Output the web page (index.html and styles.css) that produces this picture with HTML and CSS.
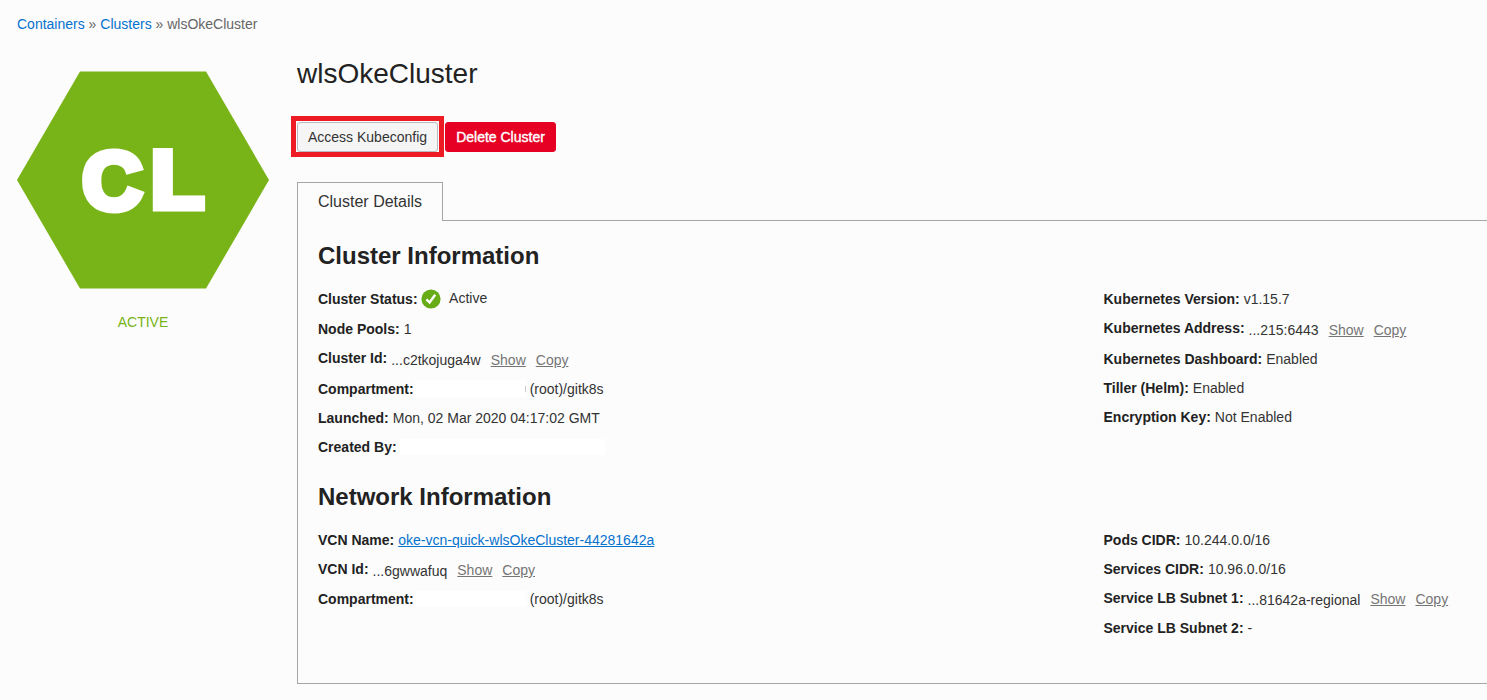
FILE: index.html
```html
<!DOCTYPE html>
<html lang="en">
<head>
<meta charset="utf-8">
<title>wlsOkeCluster</title>
<link rel="stylesheet" href="styles.css">
</head>
<body>
<nav class="breadcrumb"><a href="#">Containers</a> » <a href="#">Clusters</a> » wlsOkeCluster</nav>
<div class="layout">
  <aside class="badge">
    <svg class="hexagon" width="252" height="218" viewBox="0 0 252 218">
      <path fill="#78b417" d="M63 .5H189L252 109 189 217.5H63L0 109Z"/>
      <g class="initials">
        <text transform="translate(65.2 137.8) scale(1.02 1)">C</text>
        <text transform="translate(133.8 137.3) scale(1.07 1)">L</text>
      </g>
    </svg>
    <div class="state">ACTIVE</div>
  </aside>
  <main class="content">
    <h1 class="title">wlsOkeCluster</h1>
    <div class="actions">
      <div class="highlight"><button class="btn">Access Kubeconfig</button></div>
      <button class="btn danger">Delete Cluster</button>
    </div>
    <div class="tabs"><div class="tab">Cluster Details</div><div class="tab-line"></div></div>
    <section class="panel">
      <h2 class="heading">Cluster Information</h2>
      <div class="columns cluster">
        <div>
          <div class="row tall"><b>Cluster Status:</b>
            <svg class="check" width="20" height="20" viewBox="0 0 20 20"><circle cx="10" cy="10" r="9.6" fill="#67ac17"/><path d="M5.4 10.4L8.6 13.4L14.2 5.8" fill="none" stroke="#fff" stroke-width="2.4"/></svg>
            <span class="active">Active</span></div>
          <div class="row"><b>Node Pools:</b><span>1</span></div>
          <div class="row id"><b>Cluster Id:</b><span class="ocid">...c2tkojuga4w</span><a class="link" href="#">Show</a><a class="link" href="#">Copy</a></div>
          <div class="row"><b>Compartment:</b><span class="redacted clipped"></span><span class="path">(root)/gitk8s</span></div>
          <div class="row"><b>Launched:</b><span>Mon, 02 Mar 2020 04:17:02 GMT</span></div>
          <div class="row"><b>Created By:</b><span class="redacted wide"></span></div>
        </div>
        <div>
          <div class="row"><b>Kubernetes Version:</b><span>v1.15.7</span></div>
          <div class="row id"><b>Kubernetes Address:</b><span class="ocid">...215:6443</span><a class="link" href="#">Show</a><a class="link" href="#">Copy</a></div>
          <div class="row"><b>Kubernetes Dashboard:</b><span>Enabled</span></div>
          <div class="row"><b>Tiller (Helm):</b><span>Enabled</span></div>
          <div class="row"><b>Encryption Key:</b><span>Not Enabled</span></div>
        </div>
      </div>
      <h2 class="heading">Network Information</h2>
      <div class="columns">
        <div>
          <div class="row"><b>VCN Name:</b><a class="vcn" href="#">oke-vcn-quick-wlsOkeCluster-44281642a</a></div>
          <div class="row tall net"><b>VCN Id:</b><span class="ocid">...6gwwafuq</span><a class="link" href="#">Show</a><a class="link" href="#">Copy</a></div>
          <div class="row"><b>Compartment:</b><span class="redacted"></span><span class="path">(root)/gitk8s</span></div>
        </div>
        <div>
          <div class="row"><b>Pods CIDR:</b><span>10.244.0.0/16</span></div>
          <div class="row"><b>Services CIDR:</b><span>10.96.0.0/16</span></div>
          <div class="row tall net"><b>Service LB Subnet 1:</b><span class="ocid">...81642a-regional</span><a class="link" href="#">Show</a><a class="link" href="#">Copy</a></div>
          <div class="row"><b>Service LB Subnet 2:</b><span>-</span></div>
        </div>
      </div>
    </section>
  </main>
</div>
</body>
</html>
```
FILE: styles.css
```css
* { box-sizing: border-box; }
body { margin: 0; height: 700px; overflow: hidden; background: #fcfcfc; color: #333; font: 14px/20px "Liberation Sans", Arial, sans-serif; }
a { color: #0572ce; text-decoration: none; }
.breadcrumb { height: 38px; padding: 14px 0 0 17px; color: #666; }
.layout { display: flex; }
.badge { width: 297px; padding: 33px 0 0 17px; }
.hexagon { display: block; }
.initials { font-size: 81.5px; font-weight: 700; fill: #fff; stroke: #fff; stroke-width: 7px; }
.state { width: 252px; margin-top: 23px; text-align: center; color: #78b417; }
.content { flex: 1; min-width: 0; }
.title { margin: 19px 0 0; font-size: 28px; line-height: 34px; font-weight: 400; color: #222; }
.actions { display: flex; align-items: center; height: 41px; margin: 25px 0 25px -6px; }
.highlight { width: 153px; height: 41px; border: 5px solid #ed1c24; padding: 1px; margin-right: 1px; background: #fcfcfc; }
.btn { display: block; width: 141px; height: 30px; padding: 0; border: 1px solid #b9bac2; border-radius: 3px; background: #f5f5f5; color: #333; font: 14px/28px "Liberation Sans", Arial, sans-serif; white-space: nowrap; }
.danger { width: 111px; border-color: #e60023; background: #e60023; color: #fff; -webkit-text-stroke: .4px #fff; }
.tabs { display: flex; height: 39px; }
.tab { width: 146px; padding-left: 20px; border: 1px solid #a6a6a6; border-bottom: 0; font-size: 16px; line-height: 38px; }
.tab-line { flex: 1; border-bottom: 1px solid #a6a6a6; }
.panel { height: 463px; padding: 20px 0 0 20px; border: 1px solid #a6a6a6; border-width: 0 0 1px 1px; }
.heading { margin: 0; font-size: 24px; line-height: 30px; color: #222; }
.columns { display: grid; grid-template-columns: 785.5px 1fr; padding-top: 18px; }
.cluster { height: 211px; }
.row { display: flex; height: 29px; white-space: nowrap; }
.row b { margin-right: 4px; color: #222; }
.tall { height: 30px; }
.id { height: 31px; }
.ocid { padding-top: 2px; margin-right: 10px; }
.link { padding-top: 2px; margin-right: 10px; color: #757575; text-decoration: underline; }
.net .link { padding-top: 1px; }
.check { margin: 0 8px 0 -.5px; }
.active { margin-top: -1px; }
.vcn { text-decoration: underline; }
.redacted { width: 111px; height: 16px; margin: 2px 4px 0 -3px; background: #fff; }
.clipped { height: 17px; margin-top: 1px; background: linear-gradient(#ccc, #ccc) right center / 1px 6px no-repeat, #fff; }
.wide { width: 207px; }
```
